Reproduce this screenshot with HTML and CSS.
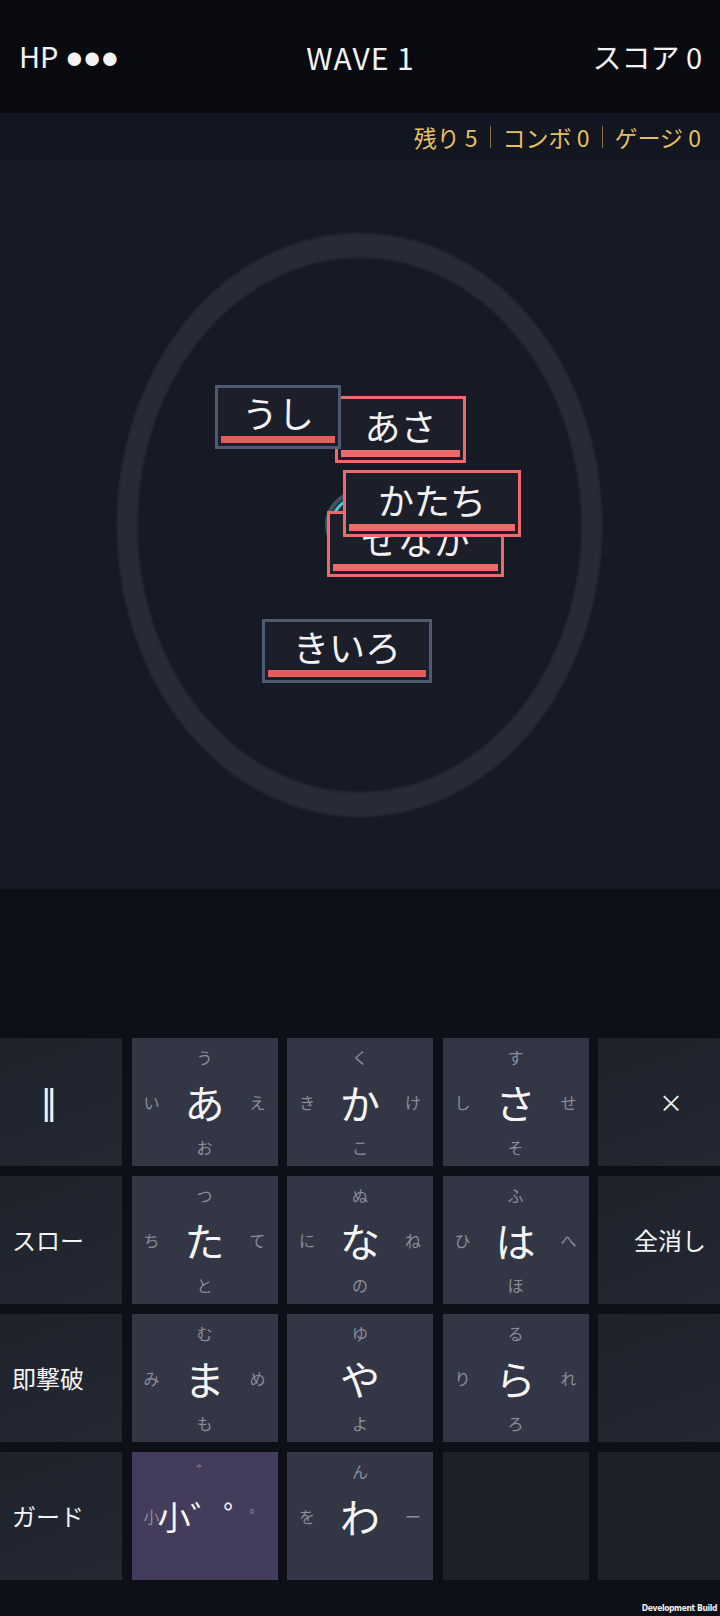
FILE: index.html
```html
<!DOCTYPE html>
<html lang="ja">
<head>
<meta charset="utf-8">
<title>Kana Defense</title>
<link rel="stylesheet" href="styles.css">
</head>
<body>
<div class="screen">
  <header class="hud">
    <span class="hp">HP <span class="dots">●●●</span></span>
    <span class="wave">WAVE 1</span>
    <span class="score">スコア 0</span>
  </header>

  <div class="status">
    <span>残り 5</span><span class="sep"></span><span>コンボ 0</span><span class="sep"></span><span>ゲージ 0</span>
  </div>

  <main class="field">
    <svg class="ring" viewBox="0 0 100 100" preserveAspectRatio="none">
      <circle cx="50" cy="50" r="47.7" fill="none" stroke="#262b37" stroke-width="4.3"/>
    </svg>
    <svg class="core" viewBox="0 0 80 80">
      <circle cx="40" cy="40" r="33" fill="#1f2d37" stroke="#3b5462" stroke-width="4"/>
      <circle cx="40" cy="40" r="28" fill="none" stroke="#58c2e6" stroke-width="3"/>
    </svg>

    <div class="word red w-asa"><span class="txt">あさ</span><span class="bar"></span></div>
    <div class="word slate w-ushi"><span class="txt">うし</span><span class="bar"></span></div>
    <div class="word red w-senaka"><span class="txt">せなか</span><span class="bar"></span></div>
    <div class="word red w-katachi"><span class="txt">かたち</span><span class="bar"></span></div>
    <div class="word slate w-kiiro"><span class="txt">きいろ</span><span class="bar"></span></div>
  </main>

  <div class="spacer"></div>

  <div class="keyboard">
    <div class="key side"><span class="sym pause">‖</span></div>
    <div class="key kana"><span class="t">う</span><span class="l">い</span><span class="m">あ</span><span class="r">え</span><span class="b">お</span></div>
    <div class="key kana"><span class="t">く</span><span class="l">き</span><span class="m">か</span><span class="r">け</span><span class="b">こ</span></div>
    <div class="key kana"><span class="t">す</span><span class="l">し</span><span class="m">さ</span><span class="r">せ</span><span class="b">そ</span></div>
    <div class="key side"><span class="sym times">×</span></div>

    <div class="key side"><span class="lbl">スロー</span></div>
    <div class="key kana"><span class="t">つ</span><span class="l">ち</span><span class="m">た</span><span class="r">て</span><span class="b">と</span></div>
    <div class="key kana"><span class="t">ぬ</span><span class="l">に</span><span class="m">な</span><span class="r">ね</span><span class="b">の</span></div>
    <div class="key kana"><span class="t">ふ</span><span class="l">ひ</span><span class="m">は</span><span class="r">へ</span><span class="b">ほ</span></div>
    <div class="key side"><span class="lbl">全消し</span></div>

    <div class="key side"><span class="lbl">即撃破</span></div>
    <div class="key kana"><span class="t">む</span><span class="l">み</span><span class="m">ま</span><span class="r">め</span><span class="b">も</span></div>
    <div class="key kana"><span class="t">ゆ</span><span class="m">や</span><span class="b">よ</span></div>
    <div class="key kana"><span class="t">る</span><span class="l">り</span><span class="m">ら</span><span class="r">れ</span><span class="b">ろ</span></div>
    <div class="key side blank"></div>

    <div class="key side"><span class="lbl">ガード</span></div>
    <div class="key kana small"><span class="t">゛</span><span class="l">小</span><span class="m mod">小゛゜</span><span class="r">゜</span></div>
    <div class="key kana"><span class="t">ん</span><span class="l">を</span><span class="m">わ</span><span class="r">ー</span></div>
    <div class="key empty"></div>
    <div class="key empty"></div>
  </div>

  <footer class="foot">Development Build</footer>
</div>
</body>
</html>
```

FILE: styles.css
```css
html, body {
  margin: 0;
  padding: 0;
  background: #0d1017;
}

body {
  font-family: "Noto Sans CJK JP", "Noto Sans", sans-serif;
  color: #f3f3f5;
}

.screen {
  width: 720px;
  height: 1616px;
  overflow: hidden;
  display: flex;
  flex-direction: column;
  background: #0d1017;
}

/* top HUD */
.hud {
  height: 113px;
  flex: none;
  display: grid;
  grid-template-columns: 1fr auto 1fr;
  align-items: center;
  padding: 0 18px 0 19px;
  background: #0a0b10;
  font-size: 29px;
  line-height: 1;
}

.hp { justify-self: start; }
.wave { justify-self: center; letter-spacing: 1px; font-size: 30px; }
.score { justify-self: end; }

.dots {
  font-family: "Liberation Sans", sans-serif;
  font-size: 31px;
  letter-spacing: -1px;
}

/* status line */
.status {
  height: 48px;
  flex: none;
  display: flex;
  align-items: center;
  justify-content: flex-end;
  padding-right: 19px;
  background: #111620;
  color: #e6bf5e;
  font-size: 23px;
  line-height: 1;
}

.sep {
  width: 1px;
  height: 22px;
  background: #8d7440;
  margin: 0 12px;
}

/* play field */
.field {
  position: relative;
  height: 728px;
  flex: none;
  background: #151a24;
}

.ring {
  position: absolute;
  left: 116px;
  top: 71px;
  width: 487px;
  height: 586px;
  filter: blur(1.2px);
}

.core {
  position: absolute;
  left: 320px;
  top: 324px;
  width: 80px;
  height: 80px;
}

.word {
  position: absolute;
  box-sizing: border-box;
  display: flex;
  flex-direction: column;
  border: 3px solid;
  background: #1c1f2a;
}

.word.red { border-color: #ee6a6a; }
.word.slate { border-color: #4e5a72; }

.txt {
  flex: 1;
  display: flex;
  align-items: center;
  justify-content: center;
  font-size: 36px;
  line-height: 1;
  color: #f2f2f4;
}

.bar {
  height: 7px;
  margin: 0 3px 3px;
  background: #e85b5b;
}

.word.red .bar { background: #ee6a6a; }

.w-ushi    { left: 215px; top: 224px; width: 126px; height: 64px; }
.w-asa     { left: 335px; top: 235px; width: 131px; height: 67px; }
.w-katachi { left: 343px; top: 309px; width: 178px; height: 67px; }
.w-senaka  { left: 327px; top: 350px; width: 177px; height: 66px; }
.w-kiiro   { left: 262px; top: 458px; width: 170px; height: 64px; }

.spacer {
  height: 149px;
  flex: none;
}

/* keyboard */
.keyboard {
  flex: none;
  margin-left: -24px;
  width: 768px;
  display: grid;
  grid-template-columns: repeat(5, 146px);
  grid-template-rows: repeat(4, 128px);
  column-gap: 9.5px;
  row-gap: 10px;
}

.key {
  position: relative;
  box-sizing: border-box;
  min-width: 0;
}

.side {
  display: flex;
  align-items: center;
  justify-content: center;
  background: linear-gradient(160deg, #1e222b 0%, #242833 100%);
  color: #f4f4f6;
}

.lbl {
  font-size: 24px;
  line-height: 1;
  margin-left: -2px;
}

.sym {
  line-height: 1;
}

.pause {
  font-family: "DejaVu Sans", sans-serif;
  font-size: 34px;
}

.times {
  font-size: 24px;
}

.empty {
  background: #1d2029;
}

.kana {
  display: grid;
  grid-template-columns: 40px minmax(0, 1fr) 40px;
  grid-template-rows: 38px minmax(0, 1fr) 38px;
  grid-template-areas:
    ". t ."
    "l m r"
    ". b .";
  align-items: center;
  justify-items: center;
  background: #333644;
  color: #8b8e9a;
  font-size: 16px;
  line-height: 1;
}

.kana .t { grid-area: t; }
.kana .l { grid-area: l; }
.kana .r { grid-area: r; }
.kana .b { grid-area: b; }

.kana .m {
  grid-area: m;
  font-size: 40px;
  color: #f5f5f7;
}

.small {
  background: #433c5a;
}

.small .m.mod {
  font-size: 33px;
  white-space: nowrap;
  justify-self: start;
  margin-left: -14px;
}

/* footer */
.foot {
  flex: 1;
  display: flex;
  align-items: flex-end;
  justify-content: flex-end;
  padding: 0 3px 4px 0;
  font-family: "DejaVu Sans Condensed", "DejaVu Sans", sans-serif;
  font-weight: bold;
  font-size: 8.5px;
  letter-spacing: -0.4px;
  line-height: 1;
  color: #f0f0f0;
}
```
